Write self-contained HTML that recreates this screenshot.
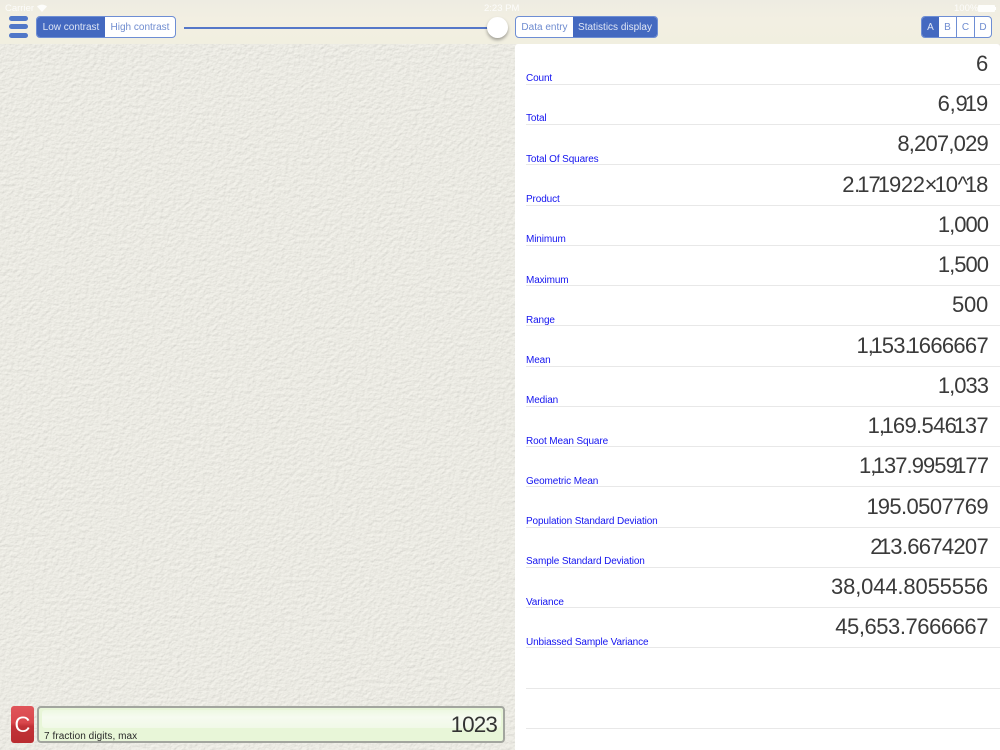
<!DOCTYPE html>
<html><head><meta charset="utf-8"><style>
*{box-sizing:border-box}
html,body{margin:0;padding:0;width:1000px;height:750px;overflow:hidden;font-family:"Liberation Sans",sans-serif;background:#ebeae3}
.abs{position:absolute}
#top{left:0;top:0;width:1000px;height:44px;background:linear-gradient(180deg,#eeece2 0,#f2efe2 45%,#f1efe0 100%)}
.seg{position:absolute;top:16px;height:22px;display:flex;border:1px solid #6e8ed4;border-radius:4px;overflow:hidden;background:#fff;font-size:10px;color:#6f8cd0;white-space:nowrap}
.seg div{display:flex;align-items:center;justify-content:center;height:100%}
.on{background:#4469c0;color:#dfe6f5}
.bar{position:absolute;left:9px;width:19px;height:5px;border-radius:3px;background:#5077c8}
.st{position:absolute;font-size:9.5px;color:#fff;top:3px;line-height:11px;opacity:.85}
#panel{left:515px;top:44px;width:485px;height:706px;background:#fff;border-top-left-radius:3px;border-top-right-radius:3px}
.l{position:absolute;left:526px;width:474px;height:1px;background:#e8e8e8}
.k{position:absolute;left:526px;margin-top:1px;font-size:10px;line-height:12px;color:#1414f0;letter-spacing:-.12px;white-space:nowrap}
.v{position:absolute;right:12px;font-size:22px;line-height:26px;color:#3a3a3a;letter-spacing:-.25px;white-space:nowrap}
.v i,.n i{font-style:normal;margin-left:-2.7px;letter-spacing:-1px}
</style></head><body>
<svg class="abs" style="left:0;top:0" width="515" height="750"><filter id="f" x="0" y="0" width="100%" height="100%"><feTurbulence type="fractalNoise" baseFrequency=".24 .28" numOctaves="3" seed="4"/><feDiffuseLighting surfaceScale=".45" diffuseConstant="1.13" lighting-color="#ebeae3"><feDistantLight azimuth="60" elevation="62"/></feDiffuseLighting></filter><rect width="515" height="750" fill="#ebeae3"/><rect width="515" height="750" filter="url(#f)"/></svg>
<div id="top" class="abs"></div>
<div class="st" style="left:5px">Carrier</div>
<svg class="abs" style="left:37px;top:4px" width="10" height="8"><path d="M0 2.5C3 0 7 0 10 2.5L5 8Z" fill="#fff" opacity=".85"/></svg>
<div class="st" style="left:484px;width:70px">2:23 PM</div>
<div class="st" style="left:954px">100%</div>
<div class="abs" style="left:978px;top:5px;width:17px;height:7px;background:#fff;border-radius:1px;opacity:.9"></div>
<div class="abs" style="left:995px;top:7px;width:1px;height:3px;background:#fff"></div>
<div class="bar" style="top:16px"></div><div class="bar" style="top:24px"></div><div class="bar" style="top:33px"></div>
<div class="seg" style="left:36px;width:140px"><div class="on" style="width:68px">Low contrast</div><div style="width:70px">High contrast</div></div>
<div class="abs" style="left:184px;top:27px;width:305px;height:2px;background:#5577c8"></div>
<div class="abs" style="left:487px;top:17px;width:21px;height:21px;border-radius:50%;background:#fff;box-shadow:0 2px 3px rgba(0,0,0,.35)"></div>
<div class="seg" style="left:515px;width:143px"><div style="width:57px">Data entry</div><div class="on" style="width:84px">Statistics display</div></div>
<div class="seg" style="left:921px;width:71px;font-size:10px"><div class="on" style="width:17px">A</div><div style="width:18px;border-right:1px solid #6e8ed4">B</div><div style="width:18px;border-right:1px solid #6e8ed4">C</div><div style="width:16px">D</div></div>
<div id="panel" class="abs"></div>
<div class="l" style="top:84px"></div><div class="k" style="top:72px">Count</div><div class="v" style="top:51px">6</div>
<div class="l" style="top:124px"></div><div class="k" style="top:112px">Total</div><div class="v" style="top:91px">6,9<i>1</i>9</div>
<div class="l" style="top:164px"></div><div class="k" style="top:153px">Total Of Squares</div><div class="v" style="top:131px;letter-spacing:-.8px">8,207,029</div>
<div class="l" style="top:205px"></div><div class="k" style="top:193px">Product</div><div class="v" style="top:172px;letter-spacing:-.35px">2.<i>1</i>7<i>1</i>922×<i>1</i>0^<i>1</i>8</div>
<div class="l" style="top:245px"></div><div class="k" style="top:233px">Minimum</div><div class="v" style="top:212px;letter-spacing:-1px"><i>1</i>,000</div>
<div class="l" style="top:285px"></div><div class="k" style="top:274px">Maximum</div><div class="v" style="top:252px;letter-spacing:-1px"><i>1</i>,500</div>
<div class="l" style="top:325px"></div><div class="k" style="top:314px">Range</div><div class="v" style="top:292px">500</div>
<div class="l" style="top:366px"></div><div class="k" style="top:354px">Mean</div><div class="v" style="top:333px;letter-spacing:-.7px"><i>1</i>,<i>1</i>53.<i>1</i>666667</div>
<div class="l" style="top:406px"></div><div class="k" style="top:394px">Median</div><div class="v" style="top:373px;letter-spacing:-1px"><i>1</i>,033</div>
<div class="l" style="top:446px"></div><div class="k" style="top:435px">Root Mean Square</div><div class="v" style="top:413px;letter-spacing:-.65px"><i>1</i>,<i>1</i>69.546<i>1</i>37</div>
<div class="l" style="top:486px"></div><div class="k" style="top:475px">Geometric Mean</div><div class="v" style="top:453px;letter-spacing:-.95px"><i>1</i>,<i>1</i>37.9959<i>1</i>77</div>
<div class="l" style="top:527px"></div><div class="k" style="top:515px">Population Standard Deviation</div><div class="v" style="top:494px;letter-spacing:-.6px"><i>1</i>95.0507769</div>
<div class="l" style="top:567px"></div><div class="k" style="top:555px">Sample Standard Deviation</div><div class="v" style="top:534px;letter-spacing:-.7px">2<i>1</i>3.6674207</div>
<div class="l" style="top:607px"></div><div class="k" style="top:596px">Variance</div><div class="v" style="top:574px;letter-spacing:-.15px">38,044.8055556</div>
<div class="l" style="top:647px"></div><div class="k" style="top:636px">Unbiassed Sample Variance</div><div class="v" style="top:614px;letter-spacing:-.45px">45,653.7666667</div>
<div class="l" style="top:688px"></div>
<div class="l" style="top:728px"></div>
<div class="abs" style="left:11px;top:706px;width:23px;height:37px;border-radius:3px;background:linear-gradient(180deg,#e0555a 0,#d9474c 45%,#c23338 55%,#b92c30 100%);color:#fff;font-size:22px;line-height:38px;text-align:center">C</div>
<div class="abs" style="left:37px;top:706px;width:468px;height:37px;border:2px solid #a2a59e;border-radius:4px;background:#e8f6d8;overflow:hidden">
<div class="abs" style="left:3px;right:2px;top:2px;height:18px;border-radius:3px;background:linear-gradient(180deg,#edf8e2,#f6fbf0 40%,#f1f9e8 100%)"></div>
<div class="abs n" style="right:6px;top:3px;font-size:22.5px;line-height:27px;color:#333;letter-spacing:-.9px"><i>1</i>023</div>
<div class="abs" style="left:5px;top:23px;font-size:10px;line-height:12px;color:#2a2a2a;letter-spacing:.07px;white-space:nowrap">7 fraction digits, max</div>
</div>
</body></html>
